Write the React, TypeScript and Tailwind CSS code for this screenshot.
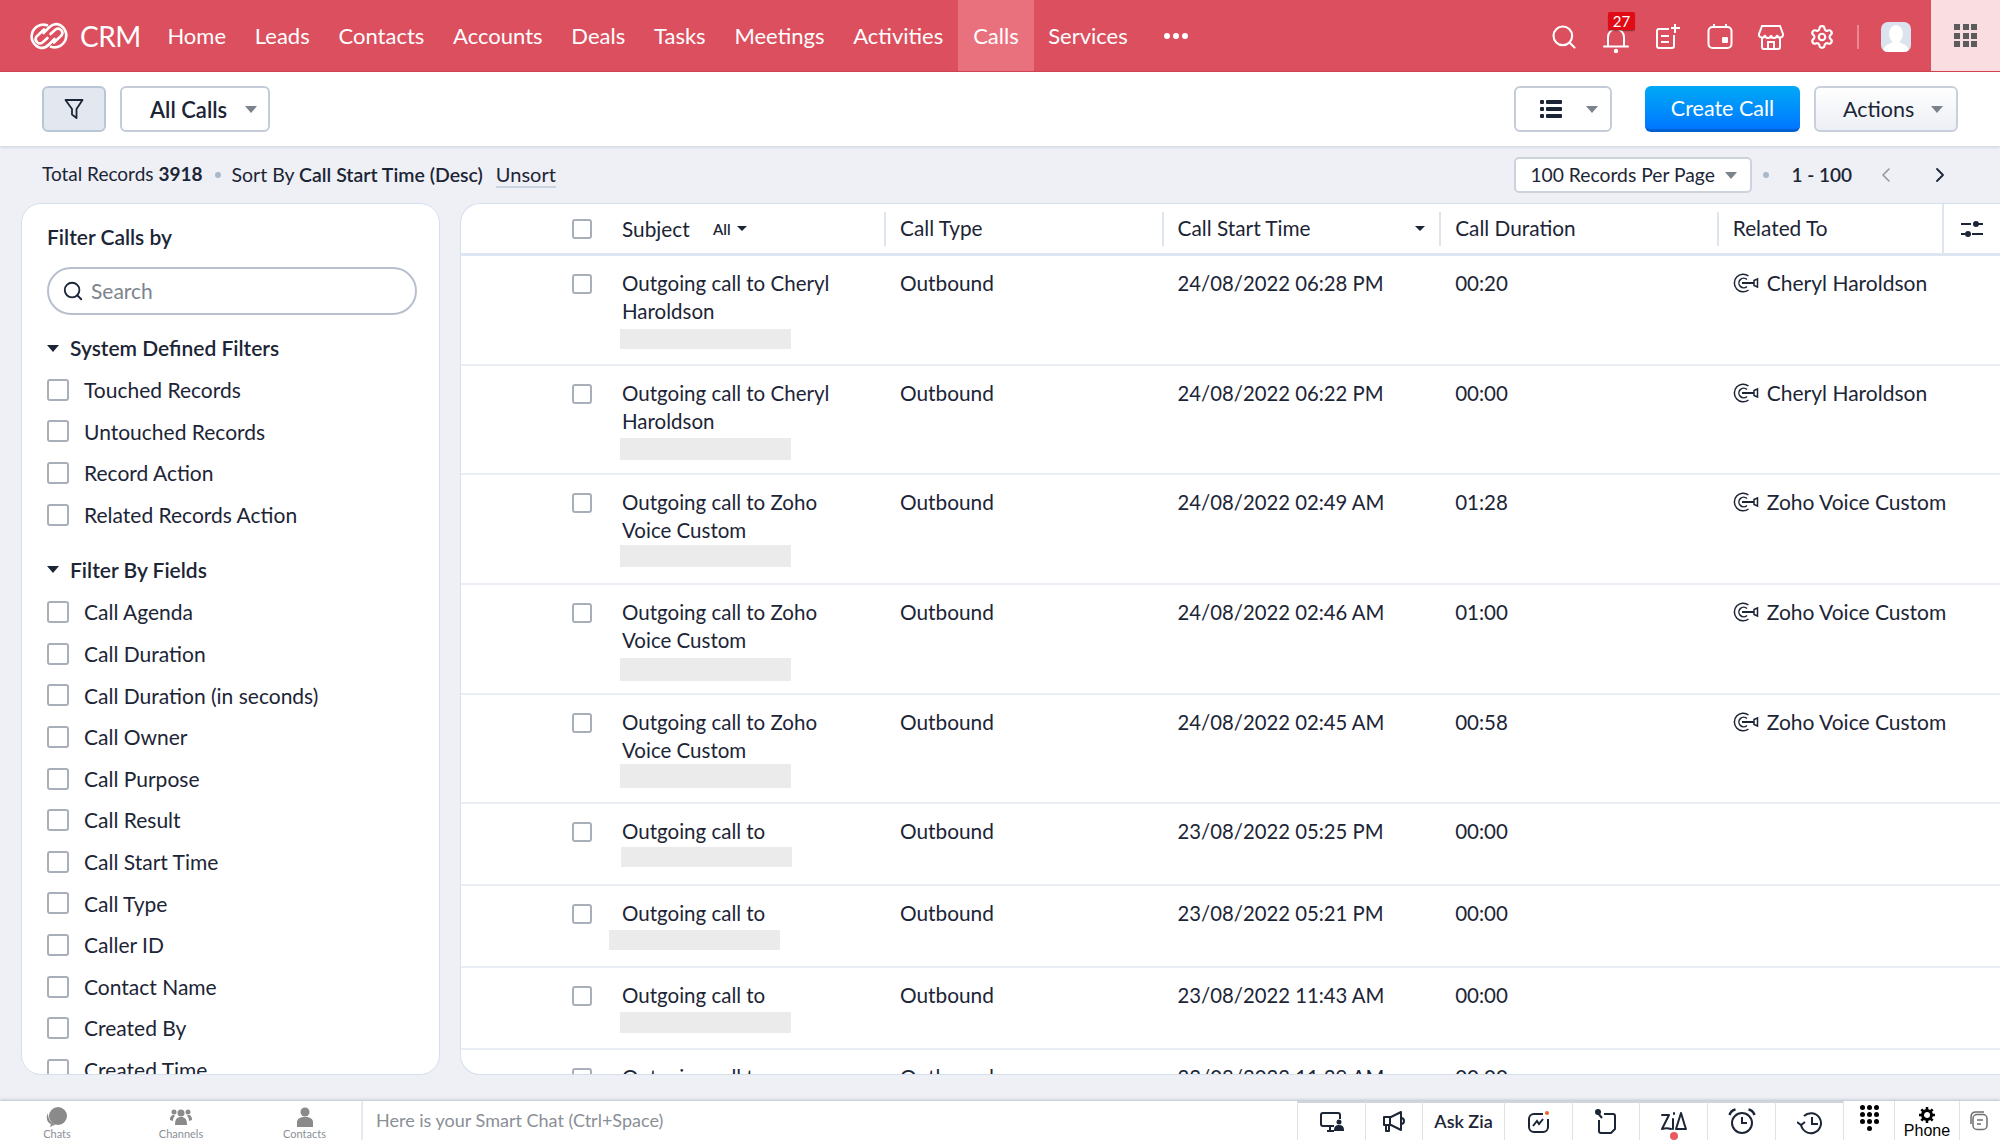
import React from "react";
import { Search, Settings, ChevronLeft, ChevronRight } from "lucide-react";

const navItems = ["Home", "Leads", "Contacts", "Accounts", "Deals", "Tasks", "Meetings", "Activities"];
const systemFilters = ["Touched Records", "Untouched Records", "Record Action", "Related Records Action"];
const fieldFilters = [
  "Call Agenda",
  "Call Duration",
  "Call Duration (in seconds)",
  "Call Owner",
  "Call Purpose",
  "Call Result",
  "Call Start Time",
  "Call Type",
  "Caller ID",
  "Contact Name",
  "Created By",
  "Created Time",
];

type Row = {
  subject: string[];
  start: string;
  duration: string;
  related?: string;
  tall?: boolean;
  mask: string;
};

const rows: Row[] = [
  { subject: ["Outgoing call to Cheryl", "Haroldson"], start: "24/08/2022 06:28 PM", duration: "00:20", related: "Cheryl Haroldson", tall: true, mask: "mt-[4px] h-[20px] -ml-[2px]" },
  { subject: ["Outgoing call to Cheryl", "Haroldson"], start: "24/08/2022 06:22 PM", duration: "00:00", related: "Cheryl Haroldson", tall: true, mask: "mt-[3px] h-[22px] -ml-[2px]" },
  { subject: ["Outgoing call to Zoho", "Voice Custom"], start: "24/08/2022 02:49 AM", duration: "01:28", related: "Zoho Voice Custom", tall: true, mask: "mt-[1px] h-[22px] -ml-[2px]" },
  { subject: ["Outgoing call to Zoho", "Voice Custom"], start: "24/08/2022 02:46 AM", duration: "01:00", related: "Zoho Voice Custom", tall: true, mask: "mt-[4px] h-[23px] -ml-[2px]" },
  { subject: ["Outgoing call to Zoho", "Voice Custom"], start: "24/08/2022 02:45 AM", duration: "00:58", related: "Zoho Voice Custom", tall: true, mask: "mt-0 h-[24px] -ml-[2px]" },
  { subject: ["Outgoing call to"], start: "23/08/2022 05:25 PM", duration: "00:00", mask: "mt-[2px] h-[20px] -ml-[1px]" },
  { subject: ["Outgoing call to"], start: "23/08/2022 05:21 PM", duration: "00:00", mask: "mt-[3px] h-[20px] -ml-[13px]" },
  { subject: ["Outgoing call to"], start: "23/08/2022 11:43 AM", duration: "00:00", mask: "mt-[3px] h-[21px] -ml-[2px]" },
  { subject: ["Outgoing call to"], start: "23/08/2022 11:39 AM", duration: "00:00", mask: "mt-[3px] h-[20px] -ml-[2px]" },
];

const Caret = ({ className = "" }: { className?: string }) => (
  <span className={`inline-block w-0 h-0 border-l-[6px] border-r-[6px] border-t-[7px] border-l-transparent border-r-transparent ${className}`} />
);

const SmallCaret = () => (
  <span className="inline-block w-0 h-0 border-l-[5px] border-r-[5px] border-t-[5px] border-l-transparent border-r-transparent border-t-[#1c2536]" />
);

const Box = ({ className = "" }: { className?: string }) => (
  <span className={`block shrink-0 rounded-[3px] border-2 border-[#a9afb9] bg-white ${className}`} />
);

// two linked loops
const Logo = () => (
  <svg width="42" height="28" viewBox="0 0 42 28" fill="none" stroke="white" strokeWidth="2.600" strokeLinecap="round">
    <path d="M19 3.200A11.800 11.800 0 1 0 13 26C16.500 26 19 24.500 21 22.500L26.500 17" />
    <path d="M23 24.800A11.800 11.800 0 1 0 29 2C25.500 2 23 3.500 21 5.500L15.500 11" />
    <path d="M19.500 16L14.500 20.500A4.300 4.300 0 0 1 8.500 14.500L16 7.500" />
    <path d="M22.500 12L27.500 7.500A4.300 4.300 0 0 1 33.500 13.500L26 20.500" />
  </svg>
);

const Header = () => (
  <header className="h-[72px] shrink-0 flex items-stretch bg-[#dc4f5e] border-b border-[#d9414f] text-white text-[22px]">
    <div className="flex items-center pl-[28px] gap-[10px] w-[153px] shrink-0">
      <Logo />
      <span className="text-[28px] leading-none tracking-[-0.5px]">CRM</span>
    </div>
    <nav className="flex items-stretch">
      {navItems.map((n) => (
        <a key={n} className="flex items-center px-[14.4px]">{n}</a>
      ))}
      <a className="flex items-center px-[15.5px] bg-[#e8717d]">Calls</a>
      <a className="flex items-center px-[14px]">Services</a>
      <span className="flex items-center gap-[3px] pl-[22px]">
        <i className="block w-[6px] h-[6px] rounded-full bg-white" />
        <i className="block w-[6px] h-[6px] rounded-full bg-white" />
        <i className="block w-[6px] h-[6px] rounded-full bg-white" />
      </span>
    </nav>
    <div className="ml-auto flex items-center gap-[25px] pr-[20px] pt-[3px]">
      <Search size={28} strokeWidth={1.8} />
      <div className="relative w-[26px] h-[26px]">
        <svg width="26" height="26" viewBox="0 0 26 26" fill="none" stroke="white" strokeWidth="2" strokeLinecap="round" className="mt-[3px]">
          <path d="M5 19V10a8 8 0 0 1 16 0v9" />
          <path d="M1 19.500H25" />
          <circle cx="13" cy="24" r="1.200" fill="white" />
        </svg>
        <span className="absolute -top-[12px] left-[5px] w-[27px] h-[18px] rounded-[2px] bg-[#e00b14] text-[15px] leading-[18px] text-center shadow-[0_1px_1px_rgba(0,0,0,0.4)]">27</span>
      </div>
      <svg width="28" height="28" viewBox="0 0 28 28" fill="none" stroke="white" strokeWidth="2">
        <path d="M15 6H5a2 2 0 0 0-2 2v15a2 2 0 0 0 2 2h13a2 2 0 0 0 2-2V12" />
        <path d="M21 1v9M17 5h9M7 13h8M7 19h8" />
      </svg>
      <svg width="26" height="28" viewBox="0 0 26 28" fill="none" stroke="white" strokeWidth="2">
        <rect x="1.500" y="4" width="23" height="21" rx="4" />
        <path d="M7 1v4M19 1v4" />
        <rect x="15" y="14" width="6" height="6" rx="1" fill="white" stroke="none" />
      </svg>
      <svg width="26" height="26" viewBox="0 0 26 26" fill="none" stroke="white" strokeWidth="2">
        <path d="M4 2h18l3 8a3 3 0 0 1-6 1 3 3 0 0 1-6 0 3 3 0 0 1-6 0 3 3 0 0 1-6-1z" />
        <path d="M4 13v10a2 2 0 0 0 2 2h14a2 2 0 0 0 2-2V13M10 25v-7h6v7" />
      </svg>
      <Settings size={26} strokeWidth={2} />
      <span className="w-[2px] h-[24px] bg-[#ea8791] -mx-[3px]" />
      <span className="w-[30px] h-[30px] rounded-[7px] bg-[#dbe3ee] overflow-hidden block">
        <svg width="30" height="30" viewBox="0 0 30 30" fill="white">
          <ellipse cx="15" cy="12" rx="7" ry="9" />
          <path d="M2 30c0-7 6-8 10-10h6c4 2 10 3 10 10z" />
        </svg>
      </span>
    </div>
    <div className="w-[69px] shrink-0 bg-[#f9dde0] flex items-center justify-center">
      <div className="grid grid-cols-3 gap-[2.500px]">
        {Array.from({ length: 9 }).map((_, i) => (
          <i key={i} className="block w-[6px] h-[6px] bg-[#5c5c5c]" />
        ))}
      </div>
    </div>
  </header>
);

const Toolbar = () => (
  <div className="h-[74px] shrink-0 bg-white flex items-center pl-[42px] pr-[42px] shadow-[0_1px_3px_rgba(100,115,140,0.25)] z-10 text-[#1c2536]">
    <button className="w-[64px] h-[46px] rounded-[6px] bg-[#e3e8f0] border-2 border-[#b9c6d6] flex items-center justify-center">
      <svg width="20" height="22" viewBox="0 0 20 22" fill="none" stroke="#1c2536" strokeWidth="1.800" strokeLinejoin="round">
        <path d="M1.500 2H18.500L12.500 11V20L8 16.500V11z" />
      </svg>
    </button>
    <button className="ml-[14px] w-[150px] h-[46px] rounded-[6px] border-2 border-[#c3ccd8] flex items-center pl-[28px] gap-[18px] text-[22px] font-semibold">
      All Calls
      <Caret className="border-t-[#7c828c]" />
    </button>
    <button className="ml-auto w-[98px] h-[46px] rounded-[6px] border-2 border-[#c3ccd8] flex items-center pl-[24px] gap-[24px]">
      <svg width="22" height="18" viewBox="0 0 22 18" fill="#1c2536">
        <rect x="0" y="0" width="4" height="4" rx="1" /><rect x="6" y="0" width="16" height="4" rx="1" />
        <rect x="0" y="7" width="4" height="4" rx="1" /><rect x="6" y="7" width="16" height="4" rx="1" />
        <rect x="0" y="14" width="4" height="4" rx="1" /><rect x="6" y="14" width="16" height="4" rx="1" />
      </svg>
      <Caret className="border-t-[#7c828c]" />
    </button>
    <button className="ml-[33px] w-[155px] h-[46px] pt-[2px] rounded-[6px] bg-gradient-to-b from-[#03a9f5] to-[#0076ff] border-b-[3px] border-[#0062d2] text-white text-[21.500px]">
      Create Call
    </button>
    <button className="ml-[14px] w-[144px] h-[46px] rounded-[6px] bg-gradient-to-b from-white to-[#eceff5] border-2 border-[#c9d0db] flex items-center pl-[27px] gap-[17px] text-[21.500px]">
      Actions
      <Caret className="border-t-[#7c828c]" />
    </button>
  </div>
);

const InfoBar = () => (
  <div className="h-[57px] shrink-0 flex items-center pl-[42px] pr-[48px] text-[#1c2536]">
    <span className="text-[19px]">Total Records <b className="font-bold">3918</b></span>
    <i className="block w-[6px] h-[6px] rounded-full bg-[#a9b8cb] ml-[13px] mr-[10px]" />
    <span className="text-[19.500px]">Sort By <b className="font-semibold">Call Start Time (Desc)</b></span>
    <span className="ml-[13px] text-[20px] border-b-2 border-[#cbd5e2] leading-[24px]">Unsort</span>
    <div className="ml-auto h-[36px] w-[238px] pt-[2px] rounded-[5px] bg-white border-2 border-[#cdd3dd] flex items-center pl-[14px] gap-[10px] text-[19.300px]">
      100 Records Per Page
      <Caret className="border-t-[#7c828c]" />
    </div>
    <i className="block w-[6px] h-[6px] rounded-full bg-[#a9b8cb] ml-[11px] mr-[22px]" />
    <b className="font-semibold text-[19px] pt-[1px]">1 - 100</b>
    <ChevronLeft size={24} strokeWidth={1.5} className="ml-[22px] text-[#8d94a0]" />
    <ChevronRight size={24} strokeWidth={1.8} className="ml-[30px]" />
  </div>
);

const FilterRow = ({ label }: { label: string }) => (
  <div className="h-[41.6px] flex items-center gap-[15px] shrink-0 whitespace-nowrap">
    <Box className="w-[22px] h-[22px]" />
    <span>{label}</span>
  </div>
);

const Sidebar = () => (
  <aside className="w-[419px] shrink-0 bg-white rounded-[20px] border border-[#d4e0ee] overflow-hidden pl-[25px] pr-[22px] text-[21px] text-[#1c2536]">
    <h2 className="mt-[19px] h-[28px] leading-[28px] font-semibold">Filter Calls by</h2>
    <div className="mt-[16px] h-[48px] rounded-full border-2 border-[#b7c0cc] flex items-center pl-[13px] gap-[7px] text-[#7d848e]">
      <Search size={22} strokeWidth={2} className="text-[#1c2536]" />
      Search
    </div>
    <div className="mt-[18px] h-[30px] flex items-center gap-[11px] font-semibold">
      <Caret className="border-t-[#1c2536]" />
      System Defined Filters
    </div>
    <div className="mt-[6px]">
      {systemFilters.map((f) => <FilterRow key={f} label={f} />)}
    </div>
    <div className="mt-[19px] h-[30px] flex items-center gap-[11px] font-semibold">
      <Caret className="border-t-[#1c2536]" />
      Filter By Fields
    </div>
    <div className="mt-[7px]">
      {fieldFilters.map((f) => <FilterRow key={f} label={f} />)}
    </div>
  </aside>
);

// target with an arrow in it
const RelatedIcon = () => (
  <svg width="26" height="20" viewBox="0 0 26 20" fill="none" stroke="#1c2536" strokeWidth="1.500" className="shrink-0">
    <path d="M15.500 3A8.800 8.800 0 1 0 15.500 17" />
    <path d="M14 6.500A4.800 4.800 0 1 0 14 13.500" />
    <path d="M9 10H21" strokeWidth="2" />
    <path d="M21 7.500l3.500-1.500v8l-3.500-1.500z" />
  </svg>
);

const HeadCell = ({ children, last }: { children: React.ReactNode; last?: boolean }) => (
  <div className={`${last ? "w-[225px]" : "w-[277.6px]"} shrink-0 h-[34px] border-l-2 border-[#dfe5ee] pl-[14px] flex items-center leading-none`}>
    {children}
  </div>
);

const CallsTable = () => (
  <section className="flex-1 min-w-0 bg-white rounded-l-[20px] border-y border-l border-[#d4e0ee] overflow-hidden text-[20.800px] leading-[28px] text-[#1c2536]">
    <div className="h-[52px] border-b-[3px] border-[#dde6f1] flex items-center">
      <div className="w-[161px] shrink-0 flex justify-end pr-[30px]">
        <Box className="w-[20px] h-[20px]" />
      </div>
      <div className="w-[262px] shrink-0 pr-[20px] flex items-center">
        <span className="w-[91px]">Subject</span>
        <span className="text-[15px] font-semibold flex items-center gap-[6px]">All <SmallCaret /></span>
      </div>
      <HeadCell>Call Type</HeadCell>
      <HeadCell>
        <span className="flex-1">Call Start Time</span>
        <span className="mr-[14px] flex"><SmallCaret /></span>
      </HeadCell>
      <HeadCell>Call Duration</HeadCell>
      <HeadCell last>Related To</HeadCell>
      <div className="flex-1 h-full border-l-2 border-[#dfe5ee] flex items-center justify-center">
        <svg width="22" height="18" viewBox="0 0 22 18" fill="#1c2536">
          <rect x="0" y="3" width="10" height="2" /><rect x="17" y="3" width="5" height="2" /><circle cx="15" cy="4" r="3" />
          <rect x="0" y="13" width="4" height="2" /><rect x="11" y="13" width="11" height="2" /><circle cx="7" cy="14" r="3" />
        </svg>
      </div>
    </div>
    {rows.map((r, i) => (
      <div key={i} className={`${r.tall ? "h-[109.7px]" : "h-[82px]"} border-b-2 border-[#e9eef4] flex items-start pt-[13px]`}>
        <div className="w-[161px] shrink-0 flex justify-end pr-[30px] pt-[5px]">
          <Box className="w-[20px] h-[20px]" />
        </div>
        <div className="w-[262px] shrink-0 pr-[20px] text-[20.500px]">
          {r.subject.map((s) => <div key={s} className="whitespace-nowrap">{s}</div>)}
          <div className={`w-[171px] bg-[#ebebeb] ${r.mask}`} />
        </div>
        <div className="w-[277.6px] shrink-0 pl-[16px]">Outbound</div>
        <div className="w-[277.6px] shrink-0 pl-[16px] text-[20.300px] whitespace-nowrap">{r.start}</div>
        <div className="w-[277.6px] shrink-0 pl-[16px] text-[20.500px]">{r.duration}</div>
        <div className="pl-[16px] flex items-center gap-[8px] whitespace-nowrap text-[21px]">
          {r.related && <RelatedIcon />}
          {r.related}
        </div>
      </div>
    ))}
  </section>
);

const ink = "#1c2536";

const dockIcons = [
  {
    w: "w-[68px]",
    c: (
      <svg width="26" height="22" viewBox="0 0 26 22" fill="none" stroke={ink} strokeWidth="2">
        <path d="M15 15H4a2 2 0 0 1-2-2V4a2 2 0 0 1 2-2h15a2 2 0 0 1 2 2v4M8 20h7M11 15v5" />
        <circle cx="20" cy="11" r="1.500" fill={ink} />
        <path d="M16 19c0-3 2-4 4-4s4 1 4 4z" fill={ink} />
      </svg>
    ),
  },
  {
    w: "w-[57px]",
    c: (
      <svg width="24" height="24" viewBox="0 0 24 24" fill="none" stroke={ink} strokeWidth="2" strokeLinejoin="round">
        <path d="M2 7h7L19 2v18L9 15H2zM8 7v8M4 15v6h3v-6M19 8c2 0 3 1.500 3 3s-1 3-3 3" />
      </svg>
    ),
  },
  { w: "w-[82px]", c: <span className="text-[18px] font-semibold">Ask Zia</span> },
  {
    w: "w-[68px]",
    c: (
      <svg width="24" height="24" viewBox="0 0 24 24" fill="none" stroke={ink} strokeWidth="2">
        <path d="M16 4H7a5 5 0 0 0-5 5v8a5 5 0 0 0 5 5h9a5 5 0 0 0 5-5V9" />
        <path d="M6 16l4-5 2 3 4-5" />
        <circle cx="20" cy="3" r="2" fill="#f0642d" stroke="none" />
      </svg>
    ),
  },
  {
    w: "w-[67px]",
    c: (
      <svg width="22" height="26" viewBox="0 0 22 26" fill="none" stroke={ink} strokeWidth="2" strokeLinejoin="round">
        <path d="M9 5h9a2 2 0 0 1 2 2v13l-4 4H6a2 2 0 0 1-2-2V11" />
        <path d="M2 3l5 6" />
        <circle cx="3" cy="3" r="2" fill={ink} />
      </svg>
    ),
  },
  {
    w: "w-[68px]",
    c: (
      <div className="relative">
        <svg width="26" height="24" viewBox="0 0 26 24" fill="none" stroke={ink} strokeWidth="2" strokeLinejoin="round" strokeLinecap="round">
          <path d="M1 5h7L1 19c3-1 6-1 9 0" />
          <path d="M12 9v10M13 3v1" />
          <path d="M20 3l-5 16h10c-2-5-3-10-5-16z" />
        </svg>
        <i className="absolute -bottom-[6px] left-[9px] w-[8px] h-[8px] rounded-full bg-[#ea5a63]" />
      </div>
    ),
  },
  {
    w: "w-[68px]",
    c: (
      <svg width="28" height="28" viewBox="0 0 28 28" fill="none" stroke={ink} strokeWidth="2">
        <circle cx="14" cy="15" r="10" />
        <path d="M14 9v6h5" />
        <path d="M1.500 7c1-3 3-5 6-5.500M26.500 7c-1-3-3-5-6-5.500" strokeWidth="2.500" />
      </svg>
    ),
  },
  {
    w: "w-[68px]",
    c: (
      <svg width="26" height="26" viewBox="0 0 26 26" fill="none" stroke={ink} strokeWidth="2">
        <path d="M4 15a10 10 0 1 0 3-8" />
        <path d="M15 8v7h6" />
        <path d="M0 13l4 3 4-3" />
      </svg>
    ),
  },
];

const Footer = () => (
  <footer className="h-[39px] shrink-0 bg-white shadow-[0_-1px_3px_rgba(90,100,120,0.35)] flex items-stretch text-[#8a8f97]">
    <div className="w-[363px] shrink-0 flex border-r-2 border-[#e6e9ef]">
      <div className="w-[114px] flex flex-col items-center pt-[6px]">
        <svg width="22" height="20" viewBox="0 0 22 20" fill="#8a8a8a"><circle cx="12" cy="9" r="9" /><path d="M2 6c-3 6 0 10 3 11l-1 3 6-3c-5 0-8-5-8-11z" /></svg>
        <span className="text-[11px] leading-[13px]">Chats</span>
      </div>
      <div className="w-[134px] flex flex-col items-center pt-[6px]">
        <svg width="22" height="20" viewBox="0 0 22 20" fill="#8a8a8a"><circle cx="11" cy="6" r="3.500" /><circle cx="4" cy="5" r="2.500" /><circle cx="18" cy="5" r="2.500" /><path d="M5 18c0-6 2-8 6-8s6 2 6 8z" /><path d="M0 13c0-3 1-5 4-5l1 1c-1 1-2 2-2 5zM22 13c0-3-1-5-4-5l-1 1c1 1 2 2 2 5z" /></svg>
        <span className="text-[11px] leading-[13px]">Channels</span>
      </div>
      <div className="flex-1 flex flex-col items-center pt-[6px]">
        <svg width="18" height="20" viewBox="0 0 18 20" fill="#8a8a8a"><circle cx="9" cy="5" r="4.500" /><path d="M1 20v-5c0-3 3-5 8-5s8 2 8 5v5z" /></svg>
        <span className="text-[11px] leading-[13px]">Contacts</span>
      </div>
    </div>
    <div className="flex-1 flex items-center pl-[13px] text-[18px]">Here is your Smart Chat (Ctrl+Space)</div>
    <div className="flex items-stretch text-[#1c2536]">
      {dockIcons.map((b, i) => (
        <div key={i} className={`${b.w} flex items-center justify-center border-l border-[#dfe2e8] border-t-2 border-t-[#cfd3da]`}>{b.c}</div>
      ))}
      <div className="w-[51px] border-l border-[#dfe2e8] flex justify-center pt-[4px]">
        <div className="grid grid-cols-3 gap-x-[2px] gap-y-[1.500px] h-[26px]">
          {Array.from({ length: 9 }).map((_, i) => <i key={i} className="block w-[5px] h-[5px] rounded-full bg-black" />)}
          <i /><i className="block w-[5px] h-[5px] rounded-full bg-black" />
        </div>
      </div>
      <div className="w-[65px] border-l border-[#dfe2e8] flex flex-col items-center pt-[6px] text-black">
        <svg width="16" height="16" viewBox="0 0 16 16" fill="none" stroke="black">
          <circle cx="8" cy="8" r="4.500" strokeWidth="3" />
          <path d="M8 0v3M8 13v3M0 8h3M13 8h3M2.300 2.300l2.200 2.200M11.500 11.500l2.200 2.200M13.700 2.300l-2.200 2.200M4.500 11.500l-2.200 2.200" strokeWidth="2.500" />
        </svg>
        <span className="font-['Liberation_Sans',sans-serif] text-[16px] leading-[15px]">Phone</span>
      </div>
      <div className="w-[41px] border-l border-[#dfe2e8] flex items-center justify-center">
        <svg width="20" height="20" viewBox="0 0 20 20" fill="none" stroke="#6f6f6f" strokeWidth="1.500">
          <rect x="3" y="3.500" width="14" height="15" rx="4" />
          <path d="M1 13V6c0-3 2-5 5-5h8M7 9h6M7 13h4" />
        </svg>
      </div>
    </div>
  </footer>
);

export default function App() {
  return (
    <div className="h-[1140px] w-[2000px] flex flex-col overflow-hidden bg-[#eef0f5] font-['Lato','Open_Sans',sans-serif]">
      <Header />
      <Toolbar />
      <InfoBar />
      <main className="flex-1 min-h-0 flex gap-[20px] pl-[21px] pb-[26px]">
        <Sidebar />
        <CallsTable />
      </main>
      <Footer />
    </div>
  );
}
